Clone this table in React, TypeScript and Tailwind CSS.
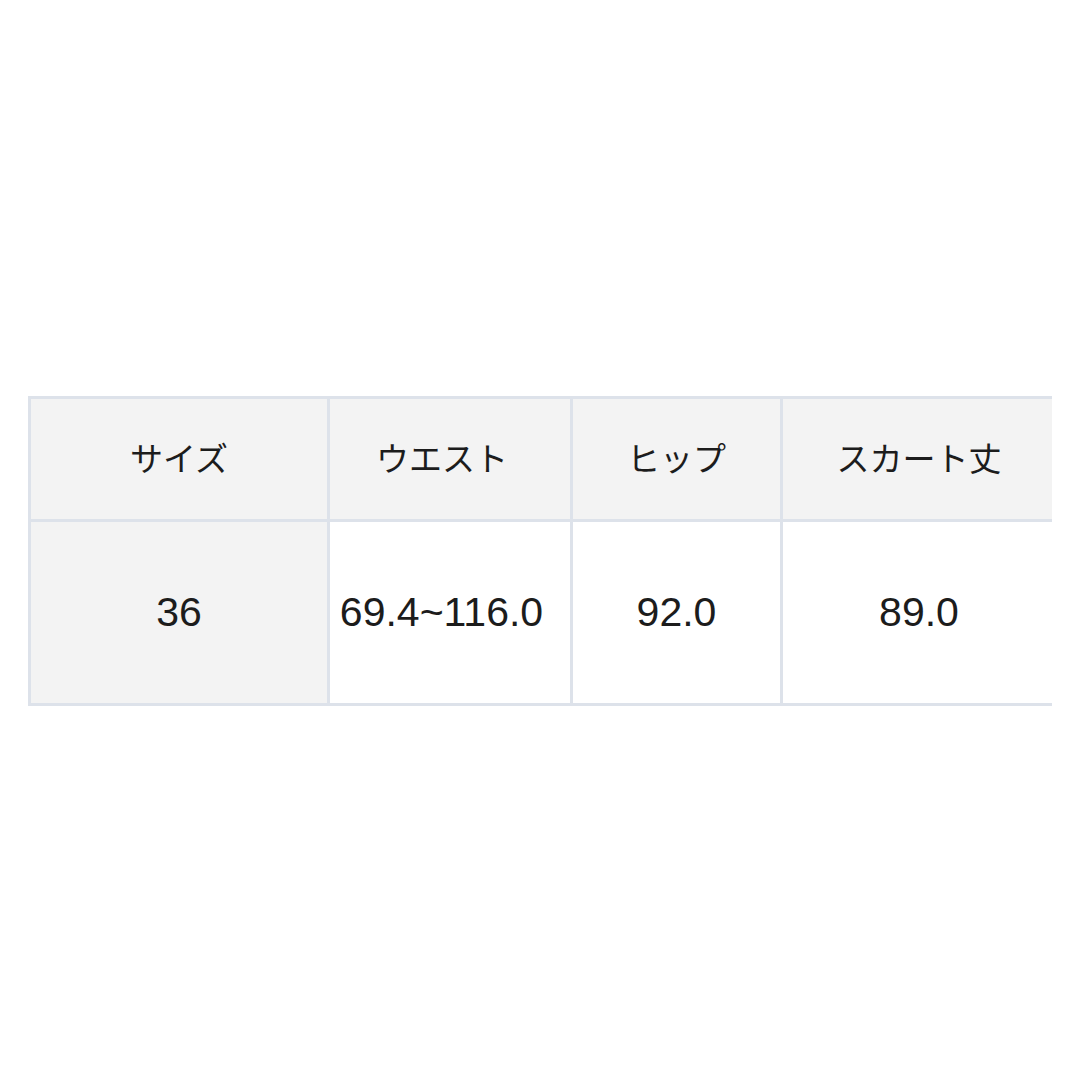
export default function App() {
  const jp = { fontFamily: '"Liberation Sans", "Noto Sans CJK JP", sans-serif' };
  return (
    <div className="w-[1080px] h-[1080px] bg-white" style={jp}>
      <div className="pt-[396px] pl-[28px]">
        <div className="w-[1024px] overflow-hidden">
          <div className="grid grid-cols-[296px_240px_207px_272px] grid-rows-[120px_181px] gap-[3px] bg-[#dde2ea] p-[3px] w-[1030px] text-[#1c1c1c]">
            <div className="bg-[#f3f3f3] flex items-center justify-center text-[33px] pt-[2px]">サイズ</div>
            <div className="bg-[#f3f3f3] flex items-center justify-center text-[33px] pt-[2px] pr-[16px]">ウエスト</div>
            <div className="bg-[#f3f3f3] flex items-center justify-center text-[33px] pt-[2px]">ヒップ</div>
            <div className="bg-[#f3f3f3] flex items-center justify-center text-[33px] pt-[2px]">スカート丈</div>
            <div className="bg-[#f3f3f3] flex items-center justify-center text-[41px]">36</div>
            <div className="bg-white flex items-center justify-center text-[41px] pr-[17px]">69.4~116.0</div>
            <div className="bg-white flex items-center justify-center text-[41px]">92.0</div>
            <div className="bg-white flex items-center justify-center text-[41px]">89.0</div>
          </div>
        </div>
      </div>
    </div>
  );
}
